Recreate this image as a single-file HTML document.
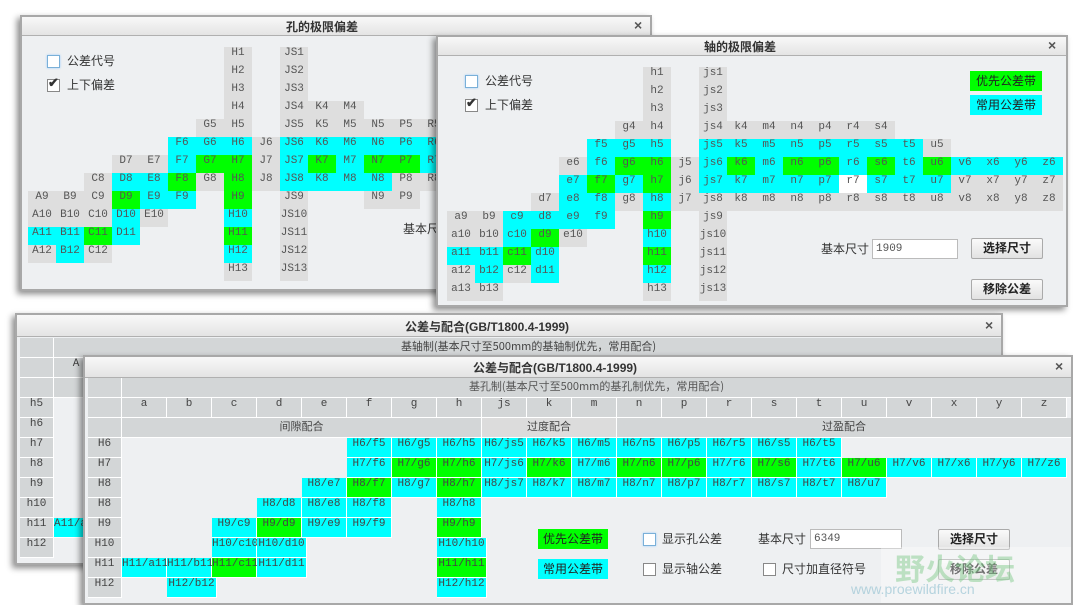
<!DOCTYPE html>
<html><head><meta charset="utf-8">
<style>
*{margin:0;padding:0;box-sizing:border-box}
body{width:1073px;height:605px;background:#fff;position:relative;overflow:hidden;font-family:"Liberation Sans","Noto Sans CJK SC",sans-serif}
.win{position:absolute;z-index:1;background:#eef0f2;overflow:hidden;box-shadow:-3px 3px 6px rgba(0,0,0,.45)}
.win::after{content:"";position:absolute;left:0;top:0;right:0;bottom:0;border:2px solid #a8a8a8;z-index:5}
.tb{position:absolute;left:0;top:0;right:0;height:21px;background:linear-gradient(#fafafa,#e4e4e4);border-bottom:1px solid #b0b0b0}
.tt{position:absolute;top:3px;font:bold 12px "Liberation Sans","Noto Sans CJK SC",sans-serif;color:#333;white-space:nowrap}
.x{position:absolute;top:2px;font:bold 14px "Liberation Sans",sans-serif;color:#555}
.k{position:absolute;width:28px;height:18px;line-height:18px;text-align:center;font:11px "Liberation Mono",monospace;color:#555;font-style:normal}
.g{background:#dedede}.c{background:#00ffff}.n{background:#00ff00}.w{background:#fff}
.f{position:absolute;width:45px;height:20px;line-height:19px;text-align:center;font:11px "Liberation Mono",monospace;color:#444;border-right:1px solid #fff;border-bottom:1px solid #fff;font-style:normal;white-space:nowrap}
.h{background:#d3d6d7}.hl{background:#dcdcdc}
.lb{position:absolute;font:12px "Liberation Sans","Noto Sans CJK SC",sans-serif;color:#333;white-space:nowrap}
.cb{position:absolute;width:13px;height:13px;border:1px solid #888;background:#fff}
.cb.a{border-color:#7ab0d8;box-shadow:0 0 2px #9cf}
.bt{position:absolute;width:72px;height:21px;border:1px solid #aaa;border-radius:2px;background:linear-gradient(#fafafa,#e2e2e2);font:bold 12px "Liberation Sans","Noto Sans CJK SC",sans-serif;text-align:center;line-height:19px;color:#222}
.in{position:absolute;height:20px;border:1px solid #bbb;background:#fff;font:11px "Liberation Mono",monospace;color:#555;line-height:18px;padding-left:3px}
.lg{position:absolute;width:72px;height:20px;font:12px "Noto Sans CJK SC",sans-serif;text-align:center;line-height:20px;color:#222}
</style></head><body>

<!-- Window 1 -->
<div class="win" style="left:20px;top:15px;width:632px;height:276px">
<div class="tb"></div><div class="tt" style="left:266px">孔的极限偏差</div><div class="x" style="left:614px">×</div>
<div class="cb a" style="left:27px;top:40px"></div><div class="lb" style="left:47px;top:37px">公差代号</div>
<div class="cb" style="left:27px;top:64px"></div><div class="lb" style="left:28px;top:60px;font-weight:bold;font-size:13px">✔</div><div class="lb" style="left:47px;top:61px">上下偏差</div>
<i class="k g" style="left:204px;top:32px">H1</i><i class="k g" style="left:260px;top:32px">JS1</i>
<i class="k g" style="left:204px;top:50px">H2</i><i class="k g" style="left:260px;top:50px">JS2</i>
<i class="k g" style="left:204px;top:68px">H3</i><i class="k g" style="left:260px;top:68px">JS3</i>
<i class="k g" style="left:204px;top:86px">H4</i><i class="k g" style="left:260px;top:86px">JS4</i><i class="k g" style="left:288px;top:86px">K4</i><i class="k g" style="left:316px;top:86px">M4</i>
<i class="k g" style="left:176px;top:104px">G5</i><i class="k g" style="left:204px;top:104px">H5</i><i class="k g" style="left:260px;top:104px">JS5</i><i class="k g" style="left:288px;top:104px">K5</i><i class="k g" style="left:316px;top:104px">M5</i><i class="k g" style="left:344px;top:104px">N5</i><i class="k g" style="left:372px;top:104px">P5</i><i class="k g" style="left:400px;top:104px">R5</i>
<i class="k c" style="left:148px;top:122px">F6</i><i class="k c" style="left:176px;top:122px">G6</i><i class="k c" style="left:204px;top:122px">H6</i><i class="k g" style="left:232px;top:122px">J6</i><i class="k c" style="left:260px;top:122px">JS6</i><i class="k c" style="left:288px;top:122px">K6</i><i class="k c" style="left:316px;top:122px">M6</i><i class="k c" style="left:344px;top:122px">N6</i><i class="k c" style="left:372px;top:122px">P6</i><i class="k c" style="left:400px;top:122px">R6</i>
<i class="k g" style="left:92px;top:140px">D7</i><i class="k g" style="left:120px;top:140px">E7</i><i class="k c" style="left:148px;top:140px">F7</i><i class="k n" style="left:176px;top:140px">G7</i><i class="k n" style="left:204px;top:140px">H7</i><i class="k g" style="left:232px;top:140px">J7</i><i class="k c" style="left:260px;top:140px">JS7</i><i class="k n" style="left:288px;top:140px">K7</i><i class="k c" style="left:316px;top:140px">M7</i><i class="k n" style="left:344px;top:140px">N7</i><i class="k n" style="left:372px;top:140px">P7</i><i class="k c" style="left:400px;top:140px">R7</i>
<i class="k g" style="left:64px;top:158px">C8</i><i class="k c" style="left:92px;top:158px">D8</i><i class="k c" style="left:120px;top:158px">E8</i><i class="k n" style="left:148px;top:158px">F8</i><i class="k g" style="left:176px;top:158px">G8</i><i class="k n" style="left:204px;top:158px">H8</i><i class="k g" style="left:232px;top:158px">J8</i><i class="k c" style="left:260px;top:158px">JS8</i><i class="k c" style="left:288px;top:158px">K8</i><i class="k c" style="left:316px;top:158px">M8</i><i class="k c" style="left:344px;top:158px">N8</i><i class="k g" style="left:372px;top:158px">P8</i><i class="k g" style="left:400px;top:158px">R8</i>
<i class="k g" style="left:8px;top:176px">A9</i><i class="k g" style="left:36px;top:176px">B9</i><i class="k g" style="left:64px;top:176px">C9</i><i class="k n" style="left:92px;top:176px">D9</i><i class="k c" style="left:120px;top:176px">E9</i><i class="k c" style="left:148px;top:176px">F9</i><i class="k n" style="left:204px;top:176px">H9</i><i class="k g" style="left:260px;top:176px">JS9</i><i class="k g" style="left:344px;top:176px">N9</i><i class="k g" style="left:372px;top:176px">P9</i>
<i class="k g" style="left:8px;top:194px">A10</i><i class="k g" style="left:36px;top:194px">B10</i><i class="k g" style="left:64px;top:194px">C10</i><i class="k c" style="left:92px;top:194px">D10</i><i class="k g" style="left:120px;top:194px">E10</i><i class="k c" style="left:204px;top:194px">H10</i><i class="k g" style="left:260px;top:194px">JS10</i>
<i class="k c" style="left:8px;top:212px">A11</i><i class="k c" style="left:36px;top:212px">B11</i><i class="k n" style="left:64px;top:212px">C11</i><i class="k c" style="left:92px;top:212px">D11</i><i class="k n" style="left:204px;top:212px">H11</i><i class="k g" style="left:260px;top:212px">JS11</i>
<i class="k g" style="left:8px;top:230px">A12</i><i class="k c" style="left:36px;top:230px">B12</i><i class="k g" style="left:64px;top:230px">C12</i><i class="k c" style="left:204px;top:230px">H12</i><i class="k g" style="left:260px;top:230px">JS12</i>
<i class="k g" style="left:204px;top:248px">H13</i><i class="k g" style="left:260px;top:248px">JS13</i>
<div class="lb" style="left:383px;top:205px">基本尺寸</div>
</div>

<!-- Window 2 -->
<div class="win" style="left:436px;top:35px;width:632px;height:272px">
<div class="tb"></div><div class="tt" style="left:268px">轴的极限偏差</div><div class="x" style="left:612px">×</div>
<div class="cb a" style="left:29px;top:40px"></div><div class="lb" style="left:49px;top:37px">公差代号</div>
<div class="cb" style="left:29px;top:64px"></div><div class="lb" style="left:30px;top:60px;font-weight:bold;font-size:13px">✔</div><div class="lb" style="left:49px;top:61px">上下偏差</div>
<div class="lg n" style="left:534px;top:36px">优先公差带</div><div class="lg c" style="left:534px;top:60px">常用公差带</div>
<i class="k g" style="left:207px;top:32px">h1</i><i class="k g" style="left:263px;top:32px">js1</i>
<i class="k g" style="left:207px;top:50px">h2</i><i class="k g" style="left:263px;top:50px">js2</i>
<i class="k g" style="left:207px;top:68px">h3</i><i class="k g" style="left:263px;top:68px">js3</i>
<i class="k g" style="left:179px;top:86px">g4</i><i class="k g" style="left:207px;top:86px">h4</i><i class="k g" style="left:263px;top:86px">js4</i><i class="k g" style="left:291px;top:86px">k4</i><i class="k g" style="left:319px;top:86px">m4</i><i class="k g" style="left:347px;top:86px">n4</i><i class="k g" style="left:375px;top:86px">p4</i><i class="k g" style="left:403px;top:86px">r4</i><i class="k g" style="left:431px;top:86px">s4</i>
<i class="k c" style="left:151px;top:104px">f5</i><i class="k c" style="left:179px;top:104px">g5</i><i class="k c" style="left:207px;top:104px">h5</i><i class="k c" style="left:263px;top:104px">js5</i><i class="k c" style="left:291px;top:104px">k5</i><i class="k c" style="left:319px;top:104px">m5</i><i class="k c" style="left:347px;top:104px">n5</i><i class="k c" style="left:375px;top:104px">p5</i><i class="k c" style="left:403px;top:104px">r5</i><i class="k c" style="left:431px;top:104px">s5</i><i class="k c" style="left:459px;top:104px">t5</i><i class="k g" style="left:487px;top:104px">u5</i>
<i class="k g" style="left:123px;top:122px">e6</i><i class="k c" style="left:151px;top:122px">f6</i><i class="k n" style="left:179px;top:122px">g6</i><i class="k n" style="left:207px;top:122px">h6</i><i class="k g" style="left:235px;top:122px">j5</i><i class="k c" style="left:263px;top:122px">js6</i><i class="k n" style="left:291px;top:122px">k6</i><i class="k c" style="left:319px;top:122px">m6</i><i class="k n" style="left:347px;top:122px">n6</i><i class="k n" style="left:375px;top:122px">p6</i><i class="k c" style="left:403px;top:122px">r6</i><i class="k n" style="left:431px;top:122px">s6</i><i class="k c" style="left:459px;top:122px">t6</i><i class="k n" style="left:487px;top:122px">u6</i><i class="k c" style="left:515px;top:122px">v6</i><i class="k c" style="left:543px;top:122px">x6</i><i class="k c" style="left:571px;top:122px">y6</i><i class="k c" style="left:599px;top:122px">z6</i>
<i class="k c" style="left:123px;top:140px">e7</i><i class="k n" style="left:151px;top:140px">f7</i><i class="k c" style="left:179px;top:140px">g7</i><i class="k n" style="left:207px;top:140px">h7</i><i class="k g" style="left:235px;top:140px">j6</i><i class="k c" style="left:263px;top:140px">js7</i><i class="k c" style="left:291px;top:140px">k7</i><i class="k c" style="left:319px;top:140px">m7</i><i class="k c" style="left:347px;top:140px">n7</i><i class="k c" style="left:375px;top:140px">p7</i><i class="k w" style="left:403px;top:140px">r7</i><i class="k c" style="left:431px;top:140px">s7</i><i class="k c" style="left:459px;top:140px">t7</i><i class="k c" style="left:487px;top:140px">u7</i><i class="k g" style="left:515px;top:140px">v7</i><i class="k g" style="left:543px;top:140px">x7</i><i class="k g" style="left:571px;top:140px">y7</i><i class="k g" style="left:599px;top:140px">z7</i>
<i class="k g" style="left:95px;top:158px">d7</i><i class="k c" style="left:123px;top:158px">e8</i><i class="k c" style="left:151px;top:158px">f8</i><i class="k g" style="left:179px;top:158px">g8</i><i class="k c" style="left:207px;top:158px">h8</i><i class="k g" style="left:235px;top:158px">j7</i><i class="k g" style="left:263px;top:158px">js8</i><i class="k g" style="left:291px;top:158px">k8</i><i class="k g" style="left:319px;top:158px">m8</i><i class="k g" style="left:347px;top:158px">n8</i><i class="k g" style="left:375px;top:158px">p8</i><i class="k g" style="left:403px;top:158px">r8</i><i class="k g" style="left:431px;top:158px">s8</i><i class="k g" style="left:459px;top:158px">t8</i><i class="k g" style="left:487px;top:158px">u8</i><i class="k g" style="left:515px;top:158px">v8</i><i class="k g" style="left:543px;top:158px">x8</i><i class="k g" style="left:571px;top:158px">y8</i><i class="k g" style="left:599px;top:158px">z8</i>
<i class="k g" style="left:11px;top:176px">a9</i><i class="k g" style="left:39px;top:176px">b9</i><i class="k c" style="left:67px;top:176px">c9</i><i class="k c" style="left:95px;top:176px">d8</i><i class="k c" style="left:123px;top:176px">e9</i><i class="k c" style="left:151px;top:176px">f9</i><i class="k n" style="left:207px;top:176px">h9</i><i class="k g" style="left:263px;top:176px">js9</i>
<i class="k g" style="left:11px;top:194px">a10</i><i class="k g" style="left:39px;top:194px">b10</i><i class="k c" style="left:67px;top:194px">c10</i><i class="k n" style="left:95px;top:194px">d9</i><i class="k g" style="left:123px;top:194px">e10</i><i class="k c" style="left:207px;top:194px">h10</i><i class="k g" style="left:263px;top:194px">js10</i>
<i class="k c" style="left:11px;top:212px">a11</i><i class="k c" style="left:39px;top:212px">b11</i><i class="k n" style="left:67px;top:212px">c11</i><i class="k c" style="left:95px;top:212px">d10</i><i class="k n" style="left:207px;top:212px">h11</i><i class="k g" style="left:263px;top:212px">js11</i>
<i class="k g" style="left:11px;top:230px">a12</i><i class="k c" style="left:39px;top:230px">b12</i><i class="k g" style="left:67px;top:230px">c12</i><i class="k c" style="left:95px;top:230px">d11</i><i class="k c" style="left:207px;top:230px">h12</i><i class="k g" style="left:263px;top:230px">js12</i>
<i class="k g" style="left:11px;top:248px">a13</i><i class="k g" style="left:39px;top:248px">b13</i><i class="k g" style="left:207px;top:248px">h13</i><i class="k g" style="left:263px;top:248px">js13</i>
<div class="lb" style="left:385px;top:205px">基本尺寸</div>
<div class="in" style="left:436px;top:204px;width:86px">1909</div>
<div class="bt" style="left:535px;top:203px">选择尺寸</div>
<div class="bt" style="left:535px;top:244px">移除公差</div>
</div>

<!-- Window 3 (back) -->
<div class="win" style="left:15px;top:313px;width:988px;height:252px">
<div class="tb" style="height:24px"></div><div class="tt" style="left:390px;top:5px">公差与配合(GB/T1800.4-1999)</div><div class="x" style="left:970px;top:4px">×</div>
<i class="f h" style="left:5px;top:25px;width:34px"></i><i class="f h" style="left:39px;top:25px;width:950px;font-family:'Noto Sans CJK SC',sans-serif">基轴制(基本尺寸至500mm的基轴制优先，常用配合)</i>
<i class="f h" style="left:5px;top:45px;width:34px"></i><i class="f h" style="left:39px;top:45px">A</i>
<i class="f h" style="left:5px;top:65px;width:34px"></i><i class="f h" style="left:39px;top:65px;width:950px"></i>
<i class="f h" style="left:5px;top:85px;width:34px">h5</i>
<i class="f h" style="left:5px;top:105px;width:34px">h6</i>
<i class="f h" style="left:5px;top:125px;width:34px">h7</i>
<i class="f h" style="left:5px;top:145px;width:34px">h8</i>
<i class="f h" style="left:5px;top:165px;width:34px">h9</i>
<i class="f h" style="left:5px;top:185px;width:34px">h10</i>
<i class="f h" style="left:5px;top:205px;width:34px">h11</i><i class="f c" style="left:39px;top:205px">A11/a11</i>
<i class="f h" style="left:5px;top:225px;width:34px">h12</i>
</div>

<!-- Window 4 (front) -->
<div class="win" style="left:83px;top:355px;width:990px;height:250px">
<div class="tb" style="height:23px"></div><div class="tt" style="left:390px;top:4px">公差与配合(GB/T1800.4-1999)</div><div class="x" style="left:972px;top:3px">×</div>
<i class="f h" style="left:5px;top:23px;width:34px"></i><i class="f h" style="left:39px;top:23px;width:950px;font-family:'Noto Sans CJK SC',sans-serif;color:#555">基孔制(基本尺寸至500mm的基孔制优先，常用配合)</i>
<i class="f h" style="left:5px;top:43px;width:34px"></i>
<i class="f h" style="left:39px;top:43px">a</i><i class="f h" style="left:84px;top:43px">b</i><i class="f h" style="left:129px;top:43px">c</i><i class="f h" style="left:174px;top:43px">d</i><i class="f h" style="left:219px;top:43px">e</i><i class="f h" style="left:264px;top:43px">f</i><i class="f h" style="left:309px;top:43px">g</i><i class="f h" style="left:354px;top:43px">h</i><i class="f h" style="left:399px;top:43px">js</i><i class="f h" style="left:444px;top:43px">k</i><i class="f h" style="left:489px;top:43px">m</i><i class="f h" style="left:534px;top:43px">n</i><i class="f h" style="left:579px;top:43px">p</i><i class="f h" style="left:624px;top:43px">r</i><i class="f h" style="left:669px;top:43px">s</i><i class="f h" style="left:714px;top:43px">t</i><i class="f h" style="left:759px;top:43px">u</i><i class="f h" style="left:804px;top:43px">v</i><i class="f h" style="left:849px;top:43px">x</i><i class="f h" style="left:894px;top:43px">y</i><i class="f h" style="left:939px;top:43px">z</i>
<i class="f h" style="left:5px;top:63px;width:34px"></i>
<i class="f h" style="left:39px;top:63px;width:360px;font-family:'Noto Sans CJK SC',sans-serif">间隙配合</i>
<i class="f hl" style="left:399px;top:63px;width:135px;font-family:'Noto Sans CJK SC',sans-serif">过度配合</i>
<i class="f h" style="left:534px;top:63px;width:455px;font-family:'Noto Sans CJK SC',sans-serif">过盈配合</i>
<i class="f h" style="left:5px;top:83px;width:34px">H6</i>
<i class="f h" style="left:5px;top:103px;width:34px">H7</i>
<i class="f h" style="left:5px;top:123px;width:34px">H8</i>
<i class="f h" style="left:5px;top:143px;width:34px">H8</i>
<i class="f h" style="left:5px;top:163px;width:34px">H9</i>
<i class="f h" style="left:5px;top:183px;width:34px">H10</i>
<i class="f h" style="left:5px;top:203px;width:34px">H11</i>
<i class="f h" style="left:5px;top:223px;width:34px">H12</i>
<i class="f c" style="left:264px;top:83px">H6/f5</i><i class="f c" style="left:309px;top:83px">H6/g5</i><i class="f c" style="left:354px;top:83px">H6/h5</i><i class="f c" style="left:399px;top:83px">H6/js5</i><i class="f c" style="left:444px;top:83px">H6/k5</i><i class="f c" style="left:489px;top:83px">H6/m5</i><i class="f c" style="left:534px;top:83px">H6/n5</i><i class="f c" style="left:579px;top:83px">H6/p5</i><i class="f c" style="left:624px;top:83px">H6/r5</i><i class="f c" style="left:669px;top:83px">H6/s5</i><i class="f c" style="left:714px;top:83px">H6/t5</i>
<i class="f c" style="left:264px;top:103px">H7/f6</i><i class="f n" style="left:309px;top:103px">H7/g6</i><i class="f n" style="left:354px;top:103px">H7/h6</i><i class="f c" style="left:399px;top:103px">H7/js6</i><i class="f n" style="left:444px;top:103px">H7/k6</i><i class="f c" style="left:489px;top:103px">H7/m6</i><i class="f n" style="left:534px;top:103px">H7/n6</i><i class="f n" style="left:579px;top:103px">H7/p6</i><i class="f c" style="left:624px;top:103px">H7/r6</i><i class="f n" style="left:669px;top:103px">H7/s6</i><i class="f c" style="left:714px;top:103px">H7/t6</i><i class="f n" style="left:759px;top:103px">H7/u6</i><i class="f c" style="left:804px;top:103px">H7/v6</i><i class="f c" style="left:849px;top:103px">H7/x6</i><i class="f c" style="left:894px;top:103px">H7/y6</i><i class="f c" style="left:939px;top:103px">H7/z6</i>
<i class="f c" style="left:219px;top:123px">H8/e7</i><i class="f n" style="left:264px;top:123px">H8/f7</i><i class="f c" style="left:309px;top:123px">H8/g7</i><i class="f n" style="left:354px;top:123px">H8/h7</i><i class="f c" style="left:399px;top:123px">H8/js7</i><i class="f c" style="left:444px;top:123px">H8/k7</i><i class="f c" style="left:489px;top:123px">H8/m7</i><i class="f c" style="left:534px;top:123px">H8/n7</i><i class="f c" style="left:579px;top:123px">H8/p7</i><i class="f c" style="left:624px;top:123px">H8/r7</i><i class="f c" style="left:669px;top:123px">H8/s7</i><i class="f c" style="left:714px;top:123px">H8/t7</i><i class="f c" style="left:759px;top:123px">H8/u7</i>
<i class="f c" style="left:174px;top:143px">H8/d8</i><i class="f c" style="left:219px;top:143px">H8/e8</i><i class="f c" style="left:264px;top:143px">H8/f8</i><i class="f c" style="left:354px;top:143px">H8/h8</i>
<i class="f c" style="left:129px;top:163px">H9/c9</i><i class="f n" style="left:174px;top:163px">H9/d9</i><i class="f c" style="left:219px;top:163px">H9/e9</i><i class="f c" style="left:264px;top:163px">H9/f9</i><i class="f n" style="left:354px;top:163px">H9/h9</i>
<i class="f c" style="left:129px;top:183px">H10/c10</i><i class="f c" style="left:174px;top:183px;width:50px">H10/d10</i><i class="f c" style="left:354px;top:183px;width:50px">H10/h10</i>
<i class="f c" style="left:39px;top:203px">H11/a11</i><i class="f c" style="left:84px;top:203px">H11/b11</i><i class="f n" style="left:129px;top:203px">H11/c11</i><i class="f c" style="left:174px;top:203px;width:50px">H11/d11</i><i class="f n" style="left:354px;top:203px;width:50px">H11/h11</i>
<i class="f c" style="left:84px;top:223px;width:50px">H12/b12</i><i class="f c" style="left:354px;top:223px;width:50px">H12/h12</i>
<div class="lg n" style="left:455px;top:174px;width:70px">优先公差带</div>
<div class="lg c" style="left:455px;top:204px;width:70px">常用公差带</div>
<div class="cb a" style="left:560px;top:178px"></div><div class="lb" style="left:579px;top:175px">显示孔公差</div>
<div class="cb" style="left:560px;top:208px"></div><div class="lb" style="left:579px;top:205px">显示轴公差</div>
<div class="cb" style="left:680px;top:208px"></div><div class="lb" style="left:699px;top:205px">尺寸加直径符号</div>
<div class="lb" style="left:675px;top:175px">基本尺寸</div>
<div class="in" style="left:727px;top:174px;width:92px">6349</div>
<div class="bt" style="left:855px;top:174px">选择尺寸</div>
<div class="bt" style="left:855px;top:204px">移除公差</div>
<div style="position:absolute;left:798px;top:192px;width:200px;height:58px;background:rgba(255,255,255,.35)"></div>
<div class="lb" style="left:812px;top:190px;font-size:30px;font-weight:bold;color:rgba(120,200,130,.45)">野火论坛</div>
<div class="lb" style="left:768px;top:226px;font-size:14px;color:rgba(120,180,200,.5)">www.proewildfire.cn</div>
</div>

</body></html>
